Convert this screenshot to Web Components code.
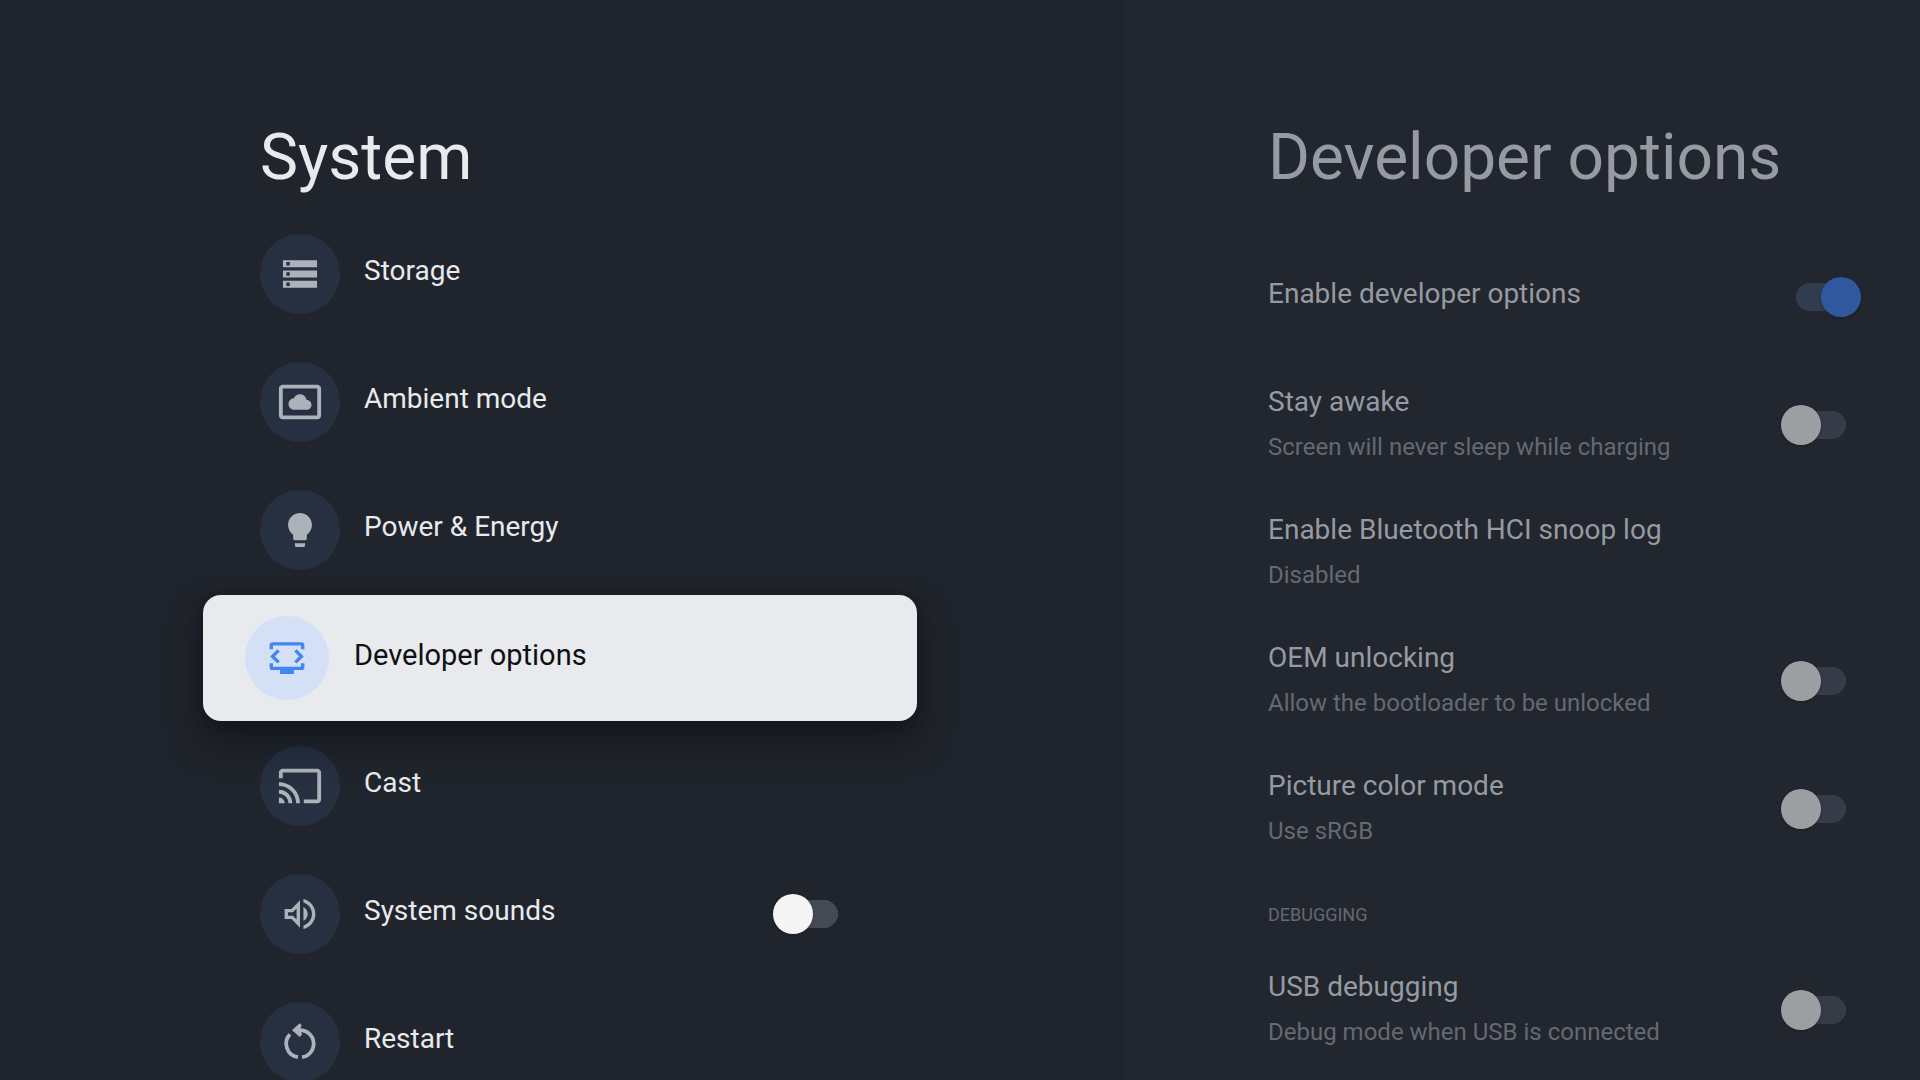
<!DOCTYPE html>
<html lang="en">
<head>
<meta charset="utf-8">
<title>System settings</title>
<style>
  body { margin: 0; background: #20242c; font-family: Roboto, "Noto Sans", sans-serif; }
</style>
</head>
<body>
<settings-screen>
  <settings-pane slot="main" heading="System">
    <menu-item icon="storage">Storage</menu-item>
    <menu-item icon="ambient">Ambient mode</menu-item>
    <menu-item icon="bulb">Power &amp; Energy</menu-item>
    <menu-item icon="developer" selected>Developer options</menu-item>
    <menu-item icon="cast">Cast</menu-item>
    <menu-item icon="sound" toggle>System sounds</menu-item>
    <menu-item icon="restart">Restart</menu-item>
  </settings-pane>
  <settings-pane slot="preview" heading="Developer options" dimmed>
    <option-row toggle="on">Enable developer options</option-row>
    <option-row toggle="off" summary="Screen will never sleep while charging">Stay awake</option-row>
    <option-row summary="Disabled">Enable Bluetooth HCI snoop log</option-row>
    <option-row toggle="off" summary="Allow the bootloader to be unlocked">OEM unlocking</option-row>
    <option-row toggle="off" summary="Use sRGB">Picture color mode</option-row>
    <option-category>DEBUGGING</option-category>
    <option-row toggle="off" summary="Debug mode when USB is connected">USB debugging</option-row>
  </settings-pane>
</settings-screen>

<script>
const ICONS = {
  storage: { size: 42, box: '-.3 -.3 24.6 24.6', art: '<path d="M2 20h20v-4H2v4zm2-3h2v2H4v-2zM2 4v4h20V4H2zm4 3H4V5h2v2zm-4 7h20v-4H2v4zm2-3h2v2H4v-2z"/>' },
  ambient: { size: 46, box: '0 0 24 24', art: '<path d="M9 16h6.5c1.38 0 2.5-1.12 2.5-2.5S16.88 11 15.5 11h-.05c-.24-1.69-1.69-3-3.45-3-1.4 0-2.6.83-3.16 2.02h-.16C7.17 10.18 6 11.45 6 13c0 1.66 1.34 3 3 3zM21 3H3c-1.1 0-2 .9-2 2v14c0 1.1.9 2 2 2h18c1.1 0 2-.9 2-2V5c0-1.1-.9-2-2-2zm0 16.01H3V4.99h18v14.02z"/>' },
  bulb: { size: 42, box: '-.3 -.3 24.6 24.6', art: '<path d="M9 21c0 .55.45 1 1 1h4c.55 0 1-.45 1-1v-1.3H9V21zm3-19C8.14 2 5 5.14 5 9c0 2.38 1.19 4.47 3 5.74V17c0 .55.45 1 1 1h6c.55 0 1-.45 1-1v-2.26c1.81-1.27 3-3.36 3-5.74 0-3.86-3.14-7-7-7z"/>' },
  developer: { size: 42, box: '0 0 42 42', art: '<g fill="none" stroke="currentColor" stroke-width="3.4"><path d="M5.3 12.3V8.4q0-1.5 1.5-1.5h28.4q1.5 0 1.5 1.5v3.9M5.3 26.3v3.6q0 1.5 1.5 1.5h28.4q1.5 0 1.5-1.5v-3.6"/><path d="M12.6 13.4l-6 6 6 6M29.4 13.4l6 6-6 6"/></g><path d="M14 31h14v6H14z"/>' },
  cast: { size: 46, box: '0 0 24 24', art: '<path d="M21 3H3c-1.1 0-2 .9-2 2v3h2V5h18v14h-7v2h7c1.1 0 2-.9 2-2V5c0-1.1-.9-2-2-2zM1 18v3h3c0-1.66-1.34-3-3-3zm0-4v2c2.76 0 5 2.24 5 5h2c0-3.87-3.13-7-7-7zm0-4v2c4.97 0 9 4.03 9 9h2c0-6.08-4.93-11-11-11z"/>' },
  sound: { size: 42, box: '-.3 -.3 24.6 24.6', art: '<path d="M3 9v6h4l5 5V4L7 9H3zm7-.17v6.34L7.83 13H5v-2h2.83L10 8.83zM16.5 12c0-1.77-1.02-3.29-2.5-4.03v8.05c1.48-.73 2.5-2.25 2.5-4.02zM14 3.23v2.06c2.89.86 5 3.54 5 6.71s-2.11 5.85-5 6.71v2.06c4.01-.91 7-4.49 7-8.77s-2.99-7.86-7-8.77z"/>' },
  restart: { size: 42, box: '-.3 -.3 24.6 24.6', art: '<path fill="none" stroke="currentColor" stroke-width="2.2" d="M11.6 5A8 8 0 0 1 13.2 20.9M10.8 20.9A8 8 0 0 1 6.1 7.5"/><path d="M11.8 1l1.2 1.2-1 2.4 1.2 3-1.3 1.4L7.3 5.1z"/>' }
};

class SettingsScreen extends HTMLElement {
  constructor() {
    super();
    this.attachShadow({ mode: 'open' }).innerHTML = `
      <style>
        :host { display: grid; grid-template-columns: 281fr 199fr; height: 100vh; overflow: hidden; }
        main { padding: 0 224px 0 220px; background: #20242c; }
        aside { padding: 0 12px 0 104px; background: #22262e; }
      </style>
      <main><slot name="main"></slot></main>
      <aside><slot name="preview"></slot></aside>`;
  }
}

class SettingsPane extends HTMLElement {
  constructor() {
    super();
    this.attachShadow({ mode: 'open' }).innerHTML = `
      <style>
        :host { display: block; padding-top: 120px; }
        h1 { margin: 0 0 18px 40px; font-size: 64px; line-height: 76px; font-weight: 400; color: #e8eaed; white-space: nowrap; }
        :host([dimmed]) h1 { margin-bottom: 41px; color: #969aa2; }
        .list { display: flex; flex-direction: column; gap: 8px; }
      </style>
      <h1></h1>
      <div class="list"><slot></slot></div>`;
    this.shadowRoot.querySelector('h1').textContent = this.getAttribute('heading');
  }
}

class ToggleSwitch extends HTMLElement {
  constructor() {
    super();
    this.attachShadow({ mode: 'open' }).innerHTML = `
      <style>
        :host { display: block; flex: none; }
        input {
          appearance: none; display: flex; align-items: center; box-sizing: border-box;
          width: 80px; height: 40px; margin: 0; outline: none;
          background: linear-gradient(var(--track, #454953) 0 0) center / 22px 28px no-repeat,
            radial-gradient(circle at 14px, var(--track, #454953) 14px, transparent 14px) 15px center / 28px 28px no-repeat,
            radial-gradient(circle at 14px, var(--track, #454953) 14px, transparent 14px) 37px center / 28px 28px no-repeat;
        }
        input::before {
          content: ""; width: 40px; height: 40px; border-radius: 50%;
          background: var(--knob, #f5f5f5); box-shadow: 0 1px 3px rgba(0, 0, 0, .2);
        }
        input:checked { --track: #323c4f; justify-content: flex-end; }
        input:checked::before { background: #30589f; }
      </style>
      <input type="checkbox" role="switch">`;
    const input = this.shadowRoot.querySelector('input');
    input.checked = this.hasAttribute('checked');
    input.setAttribute('aria-label', this.getAttribute('label') || '');
  }
}

class MenuItem extends HTMLElement {
  constructor() {
    super();
    const icon = ICONS[this.getAttribute('icon')];
    const label = this.textContent.trim();
    const toggle = this.hasAttribute('toggle') ? `<toggle-switch label="${label}"></toggle-switch>` : '';
    const tag = toggle ? 'div' : 'button';
    this.attachShadow({ mode: 'open' }).innerHTML = `
      <style>
        :host { display: block; }
        .item {
          display: flex; align-items: center; gap: 24px; box-sizing: border-box;
          width: 100%; height: 120px; padding: 0 47px 0 40px; border: 0; background: none;
          font: inherit; font-size: 28px; line-height: 36px; color: #e8eaed; text-align: left;
        }
        .icon {
          display: flex; align-items: center; justify-content: center; flex: none;
          width: 80px; height: 80px; border-radius: 50%; background: #263040; color: #adb2ba;
        }
        .text { flex: 1; padding-bottom: 6px; white-space: nowrap; }
        :host([selected]) { position: relative; z-index: 1; margin: -3px -17px; }
        :host([selected]) .item {
          height: 126px; padding: 0 42px; gap: 25px; border-radius: 18px;
          background: #e8eaed; color: #0e1013; font-size: 29px;
          box-shadow: 0 20px 36px rgba(8, 12, 18, .5), 0 2px 12px rgba(8, 12, 18, .35);
        }
        :host([selected]) .icon { width: 84px; height: 84px; background: #d4e0f6; color: #4285f4; }
      </style>
      <${tag} class="item">
        <span class="icon"><svg width="${icon.size}" height="${icon.size}" viewBox="${icon.box}" fill="currentColor" aria-hidden="true">${icon.art}</svg></span>
        <span class="text"><slot></slot></span>${toggle}
      </${tag}>`;
  }
}

class OptionRow extends HTMLElement {
  constructor() {
    super();
    const label = this.textContent.trim();
    const state = this.getAttribute('toggle');
    const summary = this.getAttribute('summary');
    this.attachShadow({ mode: 'open' }).innerHTML = `
      <style>
        :host { display: block; --knob: #9c9ea1; --track: #353b47; }
        .row { display: flex; align-items: center; height: 120px; padding: 0 47px 0 40px; }
        .text { display: flex; flex-direction: column; gap: 11px; flex: 1; padding-bottom: 6px; white-space: nowrap; }
        :host([summary]) .text { padding-bottom: 3px; }
        .title { font-size: 28px; line-height: 36px; color: #969aa2; }
        .summary { font-size: 24px; line-height: 32px; color: #646972; }
      </style>
      <div class="row">
        <div class="text">
          <span class="title"><slot></slot></span>
          ${summary ? `<span class="summary">${summary}</span>` : ''}
        </div>
        ${state ? `<toggle-switch label="${label}" ${state === 'on' ? 'checked' : ''}></toggle-switch>` : ''}
      </div>`;
  }
}

class OptionCategory extends HTMLElement {
  constructor() {
    super();
    this.attachShadow({ mode: 'open' }).innerHTML = `
      <style>
        :host { display: block; }
        h2 { margin: 0; padding: 26px 40px 15px; font-size: 18px; line-height: 24px; font-weight: 400; color: #646972; }
      </style>
      <h2><slot></slot></h2>`;
  }
}

customElements.define('toggle-switch', ToggleSwitch);
customElements.define('settings-screen', SettingsScreen);
customElements.define('settings-pane', SettingsPane);
customElements.define('menu-item', MenuItem);
customElements.define('option-row', OptionRow);
customElements.define('option-category', OptionCategory);
</script>
</body>
</html>
